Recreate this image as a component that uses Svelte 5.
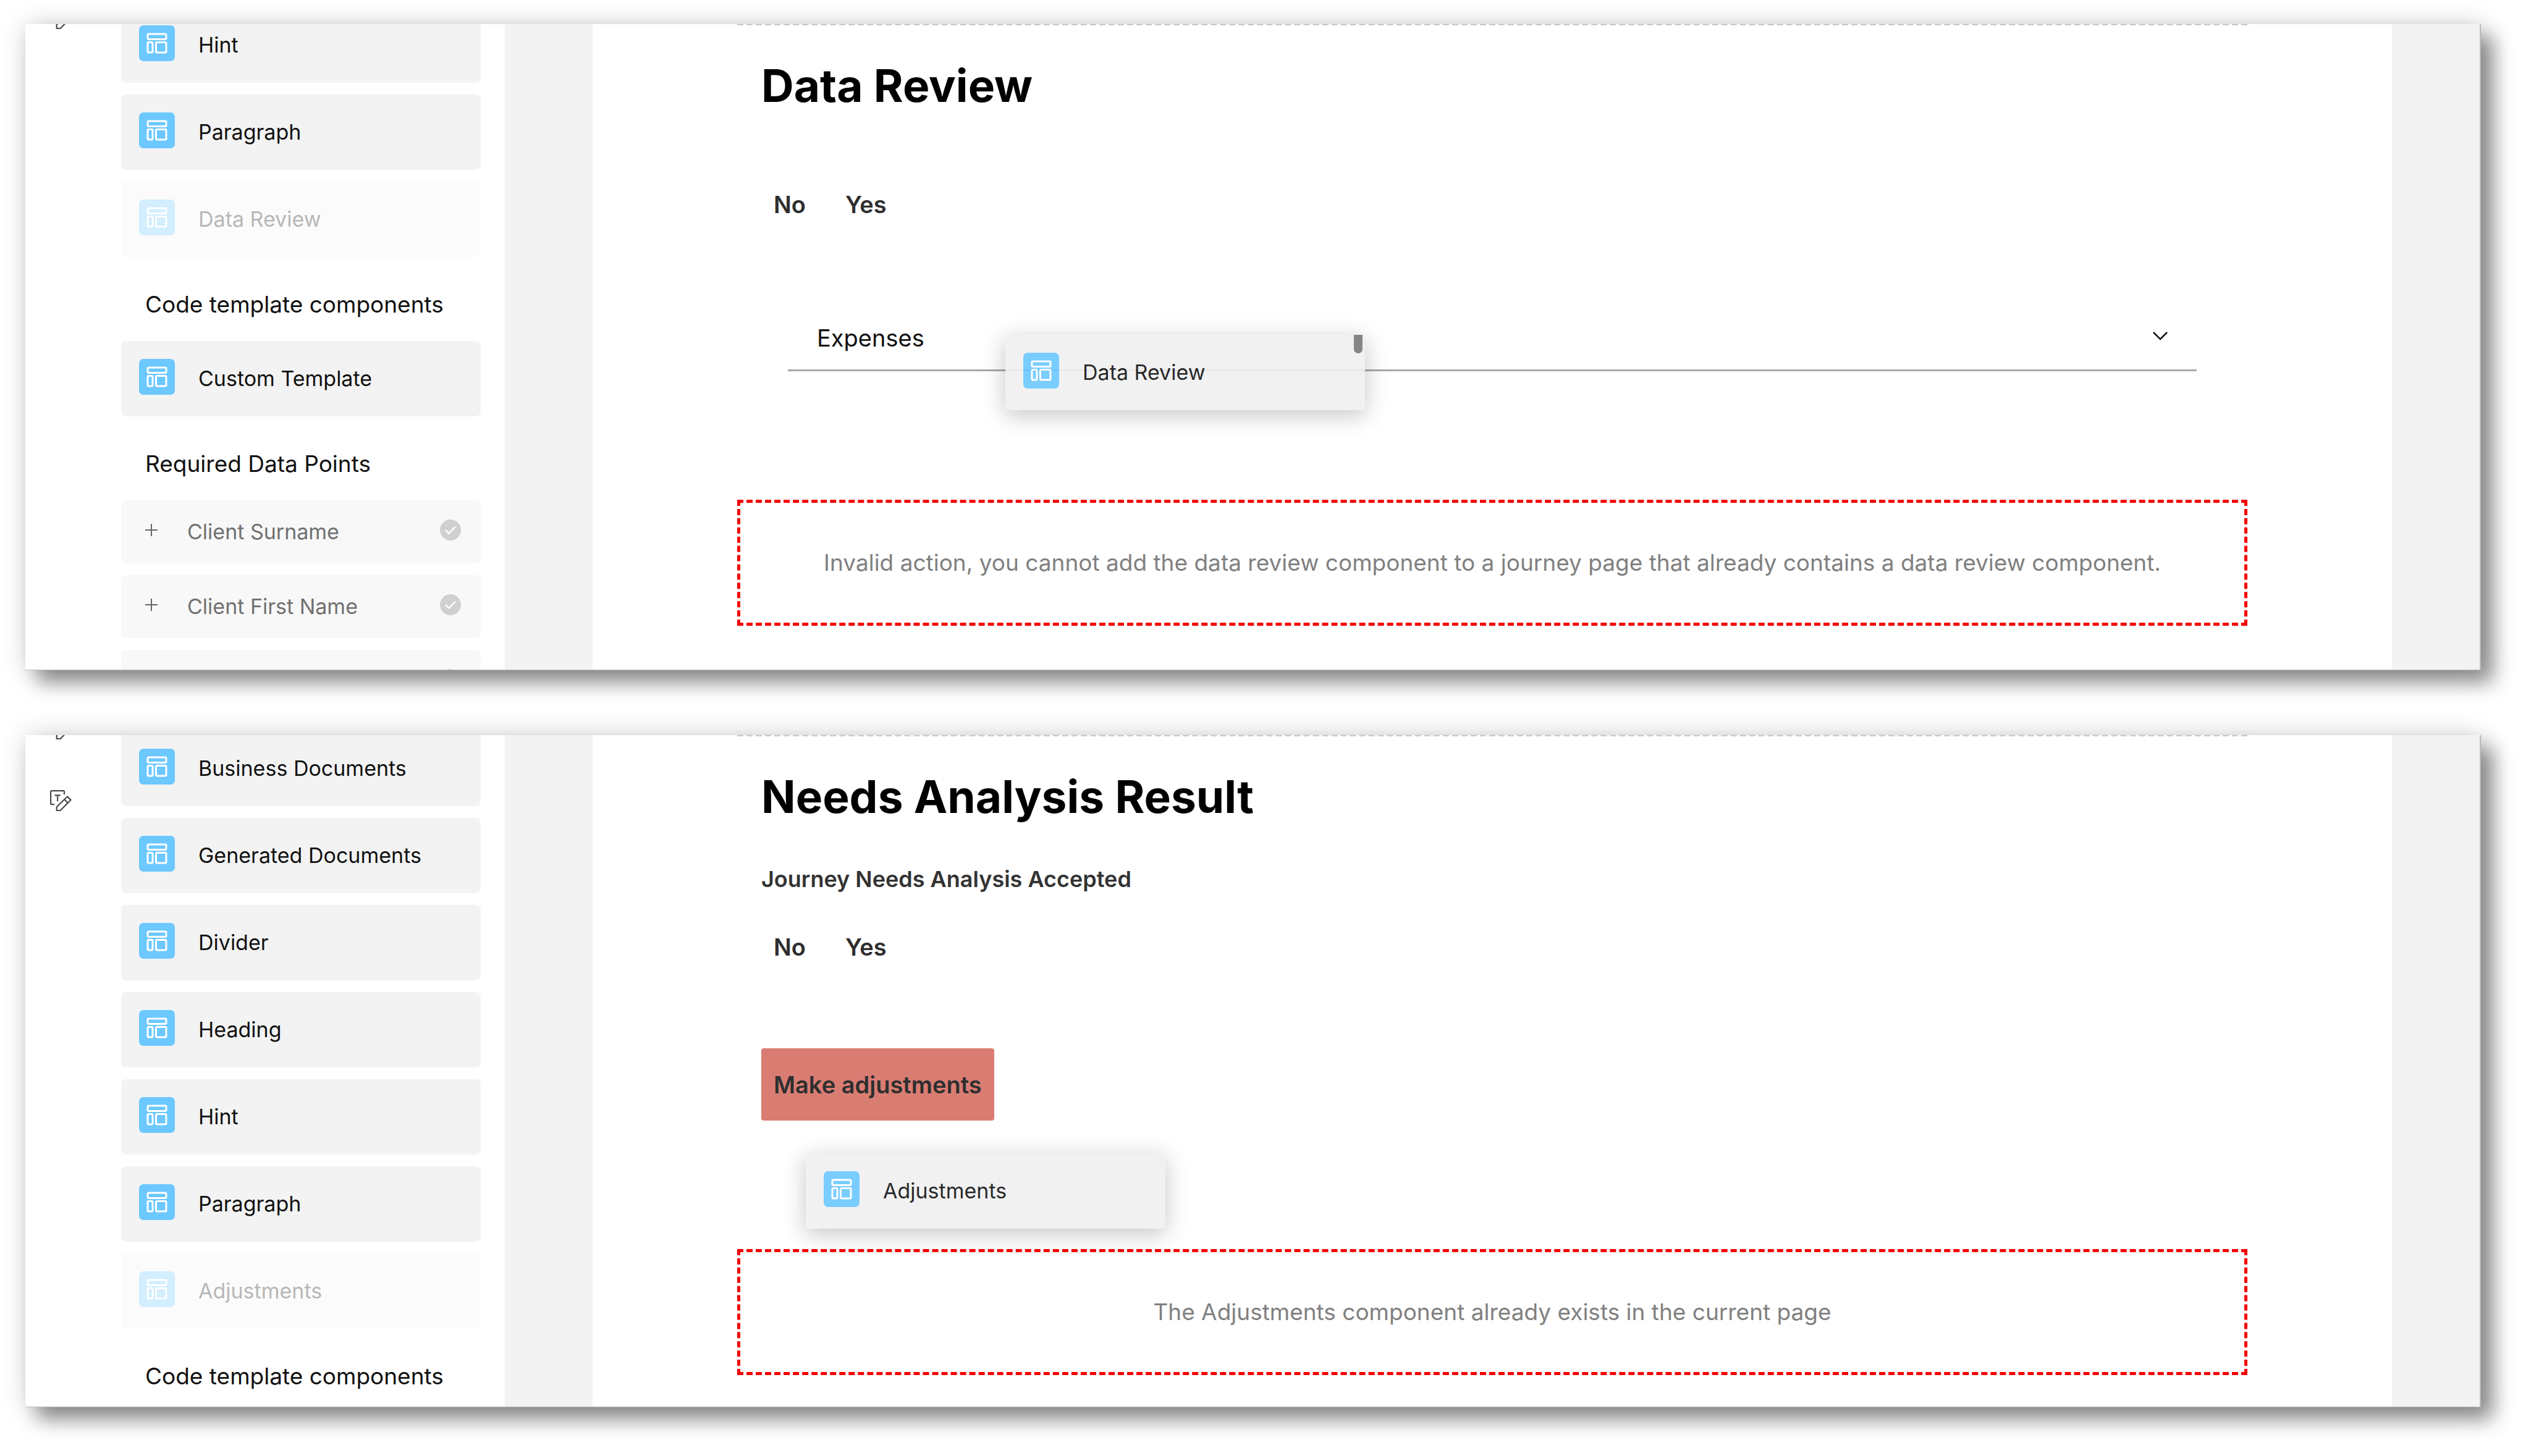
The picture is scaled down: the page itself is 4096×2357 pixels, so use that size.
<script>
  const topComponents = ['Hint', 'Paragraph'];
  const bottomComponents = [
    'Business Documents',
    'Generated Documents',
    'Divider',
    'Heading',
    'Hint',
    'Paragraph'
  ];
  const dataPoints = ['Client Surname', 'Client First Name', ''];
</script>

{#snippet blockIcon()}
  <svg class="block-icon" viewBox="0 0 58 58" aria-hidden="true">
    <rect width="58" height="58" rx="7" fill="#6cc8ff" />
    <g fill="none" stroke="#fff" stroke-width="3">
      <rect x="14" y="14" width="30" height="8.5" rx="1.5" />
      <rect x="14" y="27.5" width="8" height="16.5" rx="1.5" />
      <rect x="27.5" y="27.5" width="16.5" height="16.5" rx="1.5" />
    </g>
  </svg>
{/snippet}

{#snippet component(label, disabled = false)}
  <button class="component" type="button" {disabled}>
    {@render blockIcon()}
    <span>{label}</span>
  </button>
{/snippet}

{#snippet editIcon()}
  <svg class="edit-icon" viewBox="0 0 35 35" aria-hidden="true">
    <g fill="none" stroke="#4a4a4a" stroke-width="2.2" stroke-linejoin="round">
      <path d="M23 7.2V2.6Q23 1.1 21.500 1.1H2.600Q1.100 1.100 1.100 2.600V21.600Q1.100 23.100 2.600 23.100H7" />
      <path d="M7.400 8.300H16.800M12.200 8.300V18" />
      <path d="M28 10.500L33.500 15.900L16.600 33H10.700V27.200Z" />
      <path d="M23.500 15.500L28.500 20.500" />
    </g>
  </svg>
{/snippet}

<div class="page">
  <section class="frame first">
    <nav class="rail" aria-label="Tools">
      <button type="button" aria-label="Edit page">{@render editIcon()}</button>
    </nav>
    <aside class="library">
      <div class="list">
        {#each topComponents as label}
          {@render component(label)}
        {/each}
        {@render component('Data Review', true)}
      </div>
      <h2>Code template components</h2>
      <div class="list">
        {@render component('Custom Template')}
      </div>
      <h2>Required Data Points</h2>
      <div class="list">
        {#each dataPoints as label}
          <button class="data-point" type="button" aria-label={label || 'Data point'}>
            <svg class="plus" viewBox="0 0 20 20" aria-hidden="true">
              <path d="M10 0V20M0 10H20" stroke="#666" stroke-width="2" />
            </svg>
            <span>{label}</span>
            <svg class="check" viewBox="0 0 34 34" aria-hidden="true">
              <circle cx="17" cy="17" r="17" fill="#d0d0d0" />
              <path d="M9 17L14.300 22.300L25 11.600" fill="none" stroke="#fff" stroke-width="2.500" />
            </svg>
          </button>
        {/each}
      </div>
    </aside>
    <main class="canvas">
      <div class="drop-edge"></div>
      <h1>Data Review</h1>
      <div class="answers">
        <button type="button">No</button>
        <button type="button">Yes</button>
      </div>
      <button class="accordion" type="button">
        <span>Expenses</span>
        <svg class="chevron" viewBox="0 0 24 14" aria-hidden="true">
          <path d="M1 1L12 12L23 1" fill="none" stroke="#111" stroke-width="2.500" />
        </svg>
      </button>
      <p class="drop-zone">
        Invalid action, you cannot add the data review component to a journey page that already
        contains a data review component.
      </p>
      <div class="dragged over-accordion">
        {@render blockIcon()}
        <span>Data Review</span>
        <i class="thumb"></i>
      </div>
    </main>
  </section>

  <section class="frame second">
    <nav class="rail" aria-label="Tools">
      <button type="button" aria-label="Edit page">{@render editIcon()}</button>
      <button type="button" aria-label="Edit text">{@render editIcon()}</button>
    </nav>
    <aside class="library">
      <div class="list">
        {#each bottomComponents as label}
          {@render component(label)}
        {/each}
        {@render component('Adjustments', true)}
      </div>
      <h2>Code template components</h2>
    </aside>
    <main class="canvas">
      <div class="drop-edge"></div>
      <h1>Needs Analysis Result</h1>
      <h3>Journey Needs Analysis Accepted</h3>
      <div class="answers">
        <button type="button">No</button>
        <button type="button">Yes</button>
      </div>
      <button class="adjust" type="button">Make adjustments</button>
      <p class="drop-zone">The Adjustments component already exists in the current page</p>
      <div class="dragged over-zone">
        {@render blockIcon()}
        <span>Adjustments</span>
      </div>
    </main>
  </section>
</div>

<style>
  :global(body) {
    background: #fff;
    overflow: hidden;
  }

  .page {
    box-sizing: border-box;
    min-height: 100vh;
    padding: 39px 81px 79px 41px;
    display: flex;
    flex-direction: column;
    gap: 105px;
    font-family: Inter, 'Liberation Sans', sans-serif;
    color: #111;
  }

  h1,
  h2,
  h3,
  p {
    margin: 0;
  }

  button {
    margin: 0;
    padding: 0;
    border: 0;
    background: none;
    font: inherit;
    color: inherit;
    text-align: left;
  }

  .frame {
    display: grid;
    grid-template-columns: 115px 661px 1fr;
    box-sizing: border-box;
    overflow: hidden;
    border-right: 2px solid #b9bcbc;
    border-bottom: 1px solid #b9bcbc;
    background: #f3f3f3;
    box-shadow:
      20px 20px 30px rgba(0, 0, 0, 0.42),
      0 0 40px rgba(0, 0, 0, 0.16);
  }

  .first {
    height: 1046px;
  }

  .second {
    height: 1088px;
  }

  .rail {
    display: flex;
    flex-direction: column;
    align-items: center;
    gap: 81px;
    background: #fff;
  }

  .rail button {
    display: flex;
  }

  .first .rail {
    margin-top: -26px;
  }

  .second .rail {
    margin-top: -27px;
  }

  .edit-icon {
    width: 35px;
    height: 35px;
  }

  .library {
    padding: 0 39px 0 40px;
    background: #fff;
  }

  .first .library {
    margin-top: -27px;
  }

  .second .library {
    margin-top: -7px;
  }

  .list {
    display: flex;
    flex-direction: column;
    gap: 19px;
  }

  .component {
    display: flex;
    align-items: flex-start;
    gap: 38px;
    box-sizing: border-box;
    height: 122px;
    padding: 29px;
    border-radius: 8px;
    background: #f3f3f3;
    font-size: 34px;
    line-height: 64px;
  }

  .component:disabled {
    opacity: 0.3;
  }

  .block-icon {
    width: 58px;
    height: 58px;
    flex: none;
  }

  h2 {
    padding: 52px 39px 34px;
    font-size: 37px;
    font-weight: 400;
    line-height: 50px;
  }

  .data-point {
    display: grid;
    grid-template-columns: 20px 1fr 34px;
    column-gap: 48px;
    align-items: center;
    box-sizing: border-box;
    height: 102px;
    padding: 0 32px 6px 39px;
    border-radius: 8px;
    background: #f8f8f8;
    color: #707070;
    font-size: 34px;
  }

  .data-point span {
    padding-top: 4px;
  }

  .plus {
    width: 20px;
    height: 20px;
  }

  .check {
    width: 34px;
    height: 34px;
  }

  .canvas {
    position: relative;
    display: flex;
    flex-direction: column;
    align-items: flex-start;
    margin: 0 142px;
    padding: 0 234px;
    background: #fff;
  }

  .drop-edge {
    align-self: stretch;
    margin-top: -3px;
    border-top: 5px dashed #c8c8c8;
  }

  h1 {
    padding: 52px 39px 0;
    color: #000;
    font-size: 73px;
    font-weight: 700;
    line-height: 92px;
  }

  h3 {
    padding: 62px 39px 0;
    color: #333;
    font-size: 36px;
    font-weight: 600;
    line-height: 50px;
  }

  .answers {
    display: flex;
    gap: 24px;
    padding: 0 39px;
  }

  .first .answers {
    margin-top: 87px;
  }

  .second .answers {
    margin-top: 26px;
  }

  .answers button,
  .adjust {
    height: 117px;
    padding: 0 20px;
    border-radius: 4px;
    color: #2e2e2e;
    font-size: 38px;
    font-weight: 600;
  }

  .adjust {
    margin: 106px 39px 0;
    background: #d97d73;
  }

  .accordion {
    display: flex;
    align-items: center;
    justify-content: space-between;
    box-sizing: border-box;
    width: calc(100% - 164px);
    height: 111px;
    margin: 101px 82px 0;
    padding: 0 47px;
    border-bottom: 3px solid #a8a8a8;
    font-size: 38px;
  }

  .accordion span {
    padding-top: 6px;
  }

  .chevron {
    width: 24px;
    height: 14px;
  }

  .drop-zone {
    align-self: stretch;
    box-sizing: border-box;
    height: 204px;
    margin-top: 208px;
    border: 5px dashed #f40000;
    color: #808080;
    font-size: 37px;
    line-height: 194px;
    text-align: center;
    white-space: nowrap;
  }

  .dragged {
    position: absolute;
    display: flex;
    align-items: flex-start;
    gap: 38px;
    box-sizing: border-box;
    width: 582px;
    height: 122px;
    padding: 29px;
    border-radius: 2px;
    background: #f0f0f0;
    box-shadow: 0 8px 36px rgba(0, 0, 0, 0.25);
    font-size: 34px;
    line-height: 64px;
    opacity: 0.9;
  }

  .over-accordion {
    top: 503px;
    left: 668px;
  }

  .over-zone {
    top: 677px;
    left: 345px;
  }

  .thumb {
    position: absolute;
    top: 0;
    right: 4px;
    width: 14px;
    height: 30px;
    border-radius: 0 0 7px 7px;
    background: #7a7a7a;
  }
</style>
